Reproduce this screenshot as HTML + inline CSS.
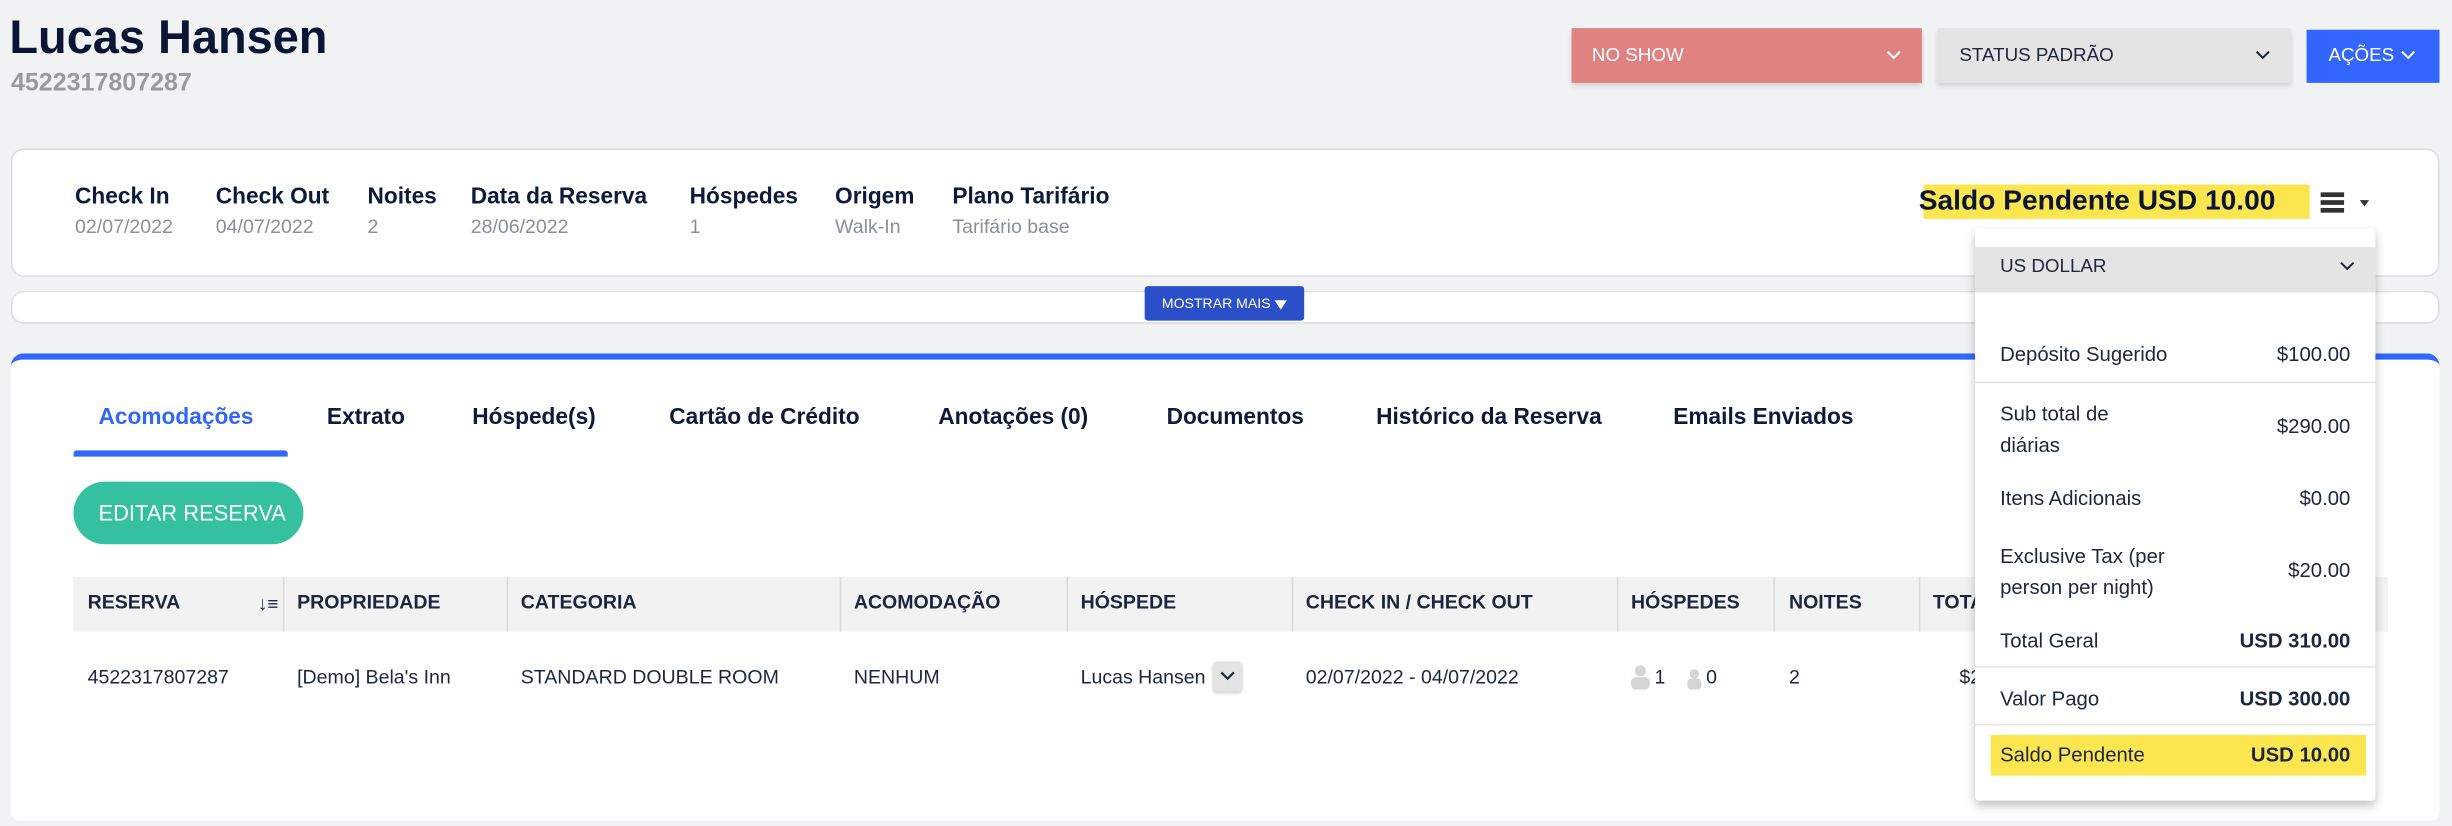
<!DOCTYPE html>
<html><head><meta charset="utf-8"><style>
html,body{margin:0;padding:0;width:2452px;height:826px;overflow:hidden;background:#f1f2f4;}
#w{position:absolute;left:0;top:0;width:1568px;height:528px;transform:scale(1.56378);transform-origin:0 0;font-family:"Liberation Sans",sans-serif;color:#0e1a3c;}
.a{position:absolute;white-space:nowrap;}
.b{font-weight:bold;}
.lbl{font-size:14.5px;font-weight:bold;top:118px;}
.val{font-size:12.5px;color:#8a8f99;top:138px;}
.tab{font-size:14.5px;font-weight:bold;top:259px;}
.th{font-size:12.5px;top:378px;font-weight:bold;color:#1d2640;}
.td{font-size:12.5px;top:426px;color:#1d2640;}
.sep{position:absolute;top:369px;width:1px;height:35px;background:#dcdcdc;}
.dl{position:absolute;left:1279px;font-size:13px;color:#1d2640;}
.dr{position:absolute;right:65px;font-size:13px;color:#1d2640;text-align:right;}
.hr{position:absolute;left:1263px;width:256px;height:1px;background:#e3e3e3;}
</style></head><body><div id="w">
<div class="a b" style="left:6px;top:8px;font-size:30px;color:#0b1636;">Lucas Hansen</div>
<div class="a b" style="left:7px;top:45px;font-size:16px;color:#9a9a9a;">4522317807287</div>

<div class="a" style="left:1005px;top:18px;width:224px;height:35px;background:#e08282;box-shadow:0 2px 3px rgba(0,0,0,.15);"></div>
<div class="a" style="left:1018px;top:28px;font-size:12px;color:#fff;">NO SHOW</div>
<svg class="a" style="left:1206px;top:32px" width="10" height="7"><path d="M1 1l4 4 4-4" stroke="#fff" fill="none" stroke-width="1.3"/></svg>
<div class="a" style="left:1239px;top:18px;width:226px;height:35px;background:#e4e4e4;box-shadow:0 2px 3px rgba(0,0,0,.15);"></div>
<div class="a" style="left:1253px;top:28px;font-size:12px;color:#1d2640;">STATUS PADRÃO</div>
<svg class="a" style="left:1442px;top:32px" width="10" height="7"><path d="M1 1l4 4 4-4" stroke="#1d2640" fill="none" stroke-width="1.3"/></svg>
<div class="a" style="left:1475px;top:19px;width:85px;height:34px;background:#3366ff;"></div>
<div class="a" style="left:1489px;top:28px;font-size:12px;color:#fff;">AÇÕES</div>
<svg class="a" style="left:1535px;top:32px" width="10" height="7"><path d="M1 1l4 4 4-4" stroke="#fff" fill="none" stroke-width="1.3"/></svg>

<div class="a" style="left:7px;top:95px;width:1551px;height:80px;background:#fff;border:1px solid #dedede;border-radius:8px;"></div>
<div class="a lbl" style="left:48px">Check In</div><div class="a val" style="left:48px">02/07/2022</div>
<div class="a lbl" style="left:138px">Check Out</div><div class="a val" style="left:138px">04/07/2022</div>
<div class="a lbl" style="left:235px">Noites</div><div class="a val" style="left:235px">2</div>
<div class="a lbl" style="left:301px">Data da Reserva</div><div class="a val" style="left:301px">28/06/2022</div>
<div class="a lbl" style="left:441px">Hóspedes</div><div class="a val" style="left:441px">1</div>
<div class="a lbl" style="left:534px">Origem</div><div class="a val" style="left:534px">Walk-In</div>
<div class="a lbl" style="left:609px">Plano Tarifário</div><div class="a val" style="left:609px">Tarifário base</div>
<div class="a" style="left:1230px;top:118px;width:247px;height:22px;background:#fbe64f;"></div>
<div class="a b" style="left:1227px;top:118px;font-size:18px;color:#0b1636;">Saldo Pendente USD 10.00</div>
<div class="a" style="left:1484px;top:123px;width:15px;height:3px;background:#333;box-shadow:0 5px 0 #333,0 10px 0 #333;"></div>
<div class="a" style="left:1509px;top:128px;border-left:3.5px solid transparent;border-right:3.5px solid transparent;border-top:4px solid #333;"></div>

<div class="a" style="left:7px;top:186px;width:1551px;height:19px;background:#fff;border:1px solid #dedede;border-radius:8px;"></div>
<div class="a" style="left:732px;top:183px;width:102px;height:22px;background:#2b4fc8;border-radius:2px;"></div>
<div class="a" style="left:743px;top:189px;font-size:9px;color:#fff;">MOSTRAR MAIS</div>
<div class="a" style="left:815px;top:192px;border-left:4px solid transparent;border-right:4px solid transparent;border-top:6px solid #fff;"></div>

<div class="a" style="left:7px;top:226px;width:1553px;height:299px;background:#fff;border-top:4px solid #3366ff;border-radius:8px 8px 6px 6px;box-sizing:border-box;"></div>
<div class="a tab" style="left:63px;color:#3366ff">Acomodações</div>
<div class="a tab" style="left:209px">Extrato</div>
<div class="a tab" style="left:302px">Hóspede(s)</div>
<div class="a tab" style="left:428px">Cartão de Crédito</div>
<div class="a tab" style="left:600px">Anotações (0)</div>
<div class="a tab" style="left:746px">Documentos</div>
<div class="a tab" style="left:880px">Histórico da Reserva</div>
<div class="a tab" style="left:1070px">Emails Enviados</div>
<div class="a" style="left:47px;top:288px;width:137px;height:4px;background:#3366ff;border-radius:2px 2px 0 0;"></div>
<div class="a" style="left:47px;top:308px;width:147px;height:40px;background:#35c19f;border-radius:20px;"></div>
<div class="a" style="left:63px;top:320px;font-size:14px;color:#fff;">EDITAR RESERVA</div>

<div class="a" style="left:47px;top:369px;width:1480px;height:35px;background:#f2f2f2;"></div>
<div class="sep" style="left:181px"></div><div class="sep" style="left:324px"></div><div class="sep" style="left:537px"></div><div class="sep" style="left:682px"></div><div class="sep" style="left:826px"></div><div class="sep" style="left:1034px"></div><div class="sep" style="left:1134px"></div><div class="sep" style="left:1227px"></div>
<div class="a th" style="left:56px">RESERVA</div>
<div class="a" style="left:165px;top:379px;font-size:12px;color:#1d2640;font-weight:bold;">↓≡</div>
<div class="a th" style="left:190px">PROPRIEDADE</div>
<div class="a th" style="left:333px">CATEGORIA</div>
<div class="a th" style="left:546px">ACOMODAÇÃO</div>
<div class="a th" style="left:691px">HÓSPEDE</div>
<div class="a th" style="left:835px">CHECK IN / CHECK OUT</div>
<div class="a th" style="left:1043px">HÓSPEDES</div>
<div class="a th" style="left:1144px">NOITES</div>
<div class="a th" style="left:1236px">TOTAL</div>
<div class="a td" style="left:56px">4522317807287</div>
<div class="a td" style="left:190px">[Demo] Bela's Inn</div>
<div class="a td" style="left:333px">STANDARD DOUBLE ROOM</div>
<div class="a td" style="left:546px">NENHUM</div>
<div class="a td" style="left:691px">Lucas Hansen</div>
<div class="a" style="left:776px;top:423px;width:18px;height:19px;background:#e4e4e4;border-radius:2px;box-shadow:0 1px 2px rgba(0,0,0,.2);"></div>
<svg class="a" style="left:780px;top:429px" width="10" height="7"><path d="M1 1l4 4 4-4" stroke="#1d2640" fill="none" stroke-width="1.4"/></svg>
<div class="a td" style="left:835px">02/07/2022 - 04/07/2022</div>
<svg class="a" style="left:1042px;top:425px" width="14" height="16"><circle cx="7" cy="4" r="3.5" fill="#d5d5d5"/><rect x="1" y="8" width="12" height="8" rx="3" fill="#d5d5d5"/></svg>
<div class="a td" style="left:1058px">1</div>
<svg class="a" style="left:1078px;top:428px" width="11" height="13"><circle cx="5.5" cy="3" r="3" fill="#d5d5d5"/><rect x="1" y="6" width="9" height="7" rx="2.5" fill="#d5d5d5"/></svg>
<div class="a td" style="left:1091px">0</div>
<div class="a td" style="left:1144px">2</div>
<div class="a td" style="left:1253px">$290</div>

<div class="a" style="left:1263px;top:146px;width:256px;height:366px;background:#fff;box-shadow:0 3px 6px rgba(0,0,0,.25);border-radius:2px;"></div>
<div class="a" style="left:1263px;top:158px;width:256px;height:29px;background:#e4e4e4;"></div>
<div class="dl" style="top:163px;font-size:12px;">US DOLLAR</div>
<svg class="a" style="left:1496px;top:167px" width="10" height="7"><path d="M1 1l4 4 4-4" stroke="#1d2640" fill="none" stroke-width="1.3"/></svg>
<div class="dl" style="top:219px">Depósito Sugerido</div><div class="dr" style="top:219px">$100.00</div>
<div class="hr" style="top:244px"></div>
<div class="dl" style="top:255px;line-height:20px">Sub total de<br>diárias</div><div class="dr" style="top:265px">$290.00</div>
<div class="dl" style="top:311px">Itens Adicionais</div><div class="dr" style="top:311px">$0.00</div>
<div class="dl" style="top:346px;line-height:20px">Exclusive Tax (per<br>person per night)</div><div class="dr" style="top:357px">$20.00</div>
<div class="dl" style="top:402px">Total Geral</div><div class="dr b" style="top:402px">USD 310.00</div>
<div class="hr" style="top:426px"></div>
<div class="dl" style="top:439px">Valor Pago</div><div class="dr b" style="top:439px">USD 300.00</div>
<div class="hr" style="top:463px"></div>
<div class="a" style="left:1273px;top:470px;width:240px;height:26px;background:#fbe64f;"></div>
<div class="dl" style="top:475px">Saldo Pendente</div><div class="dr b" style="top:475px">USD 10.00</div>
</div></body></html>
